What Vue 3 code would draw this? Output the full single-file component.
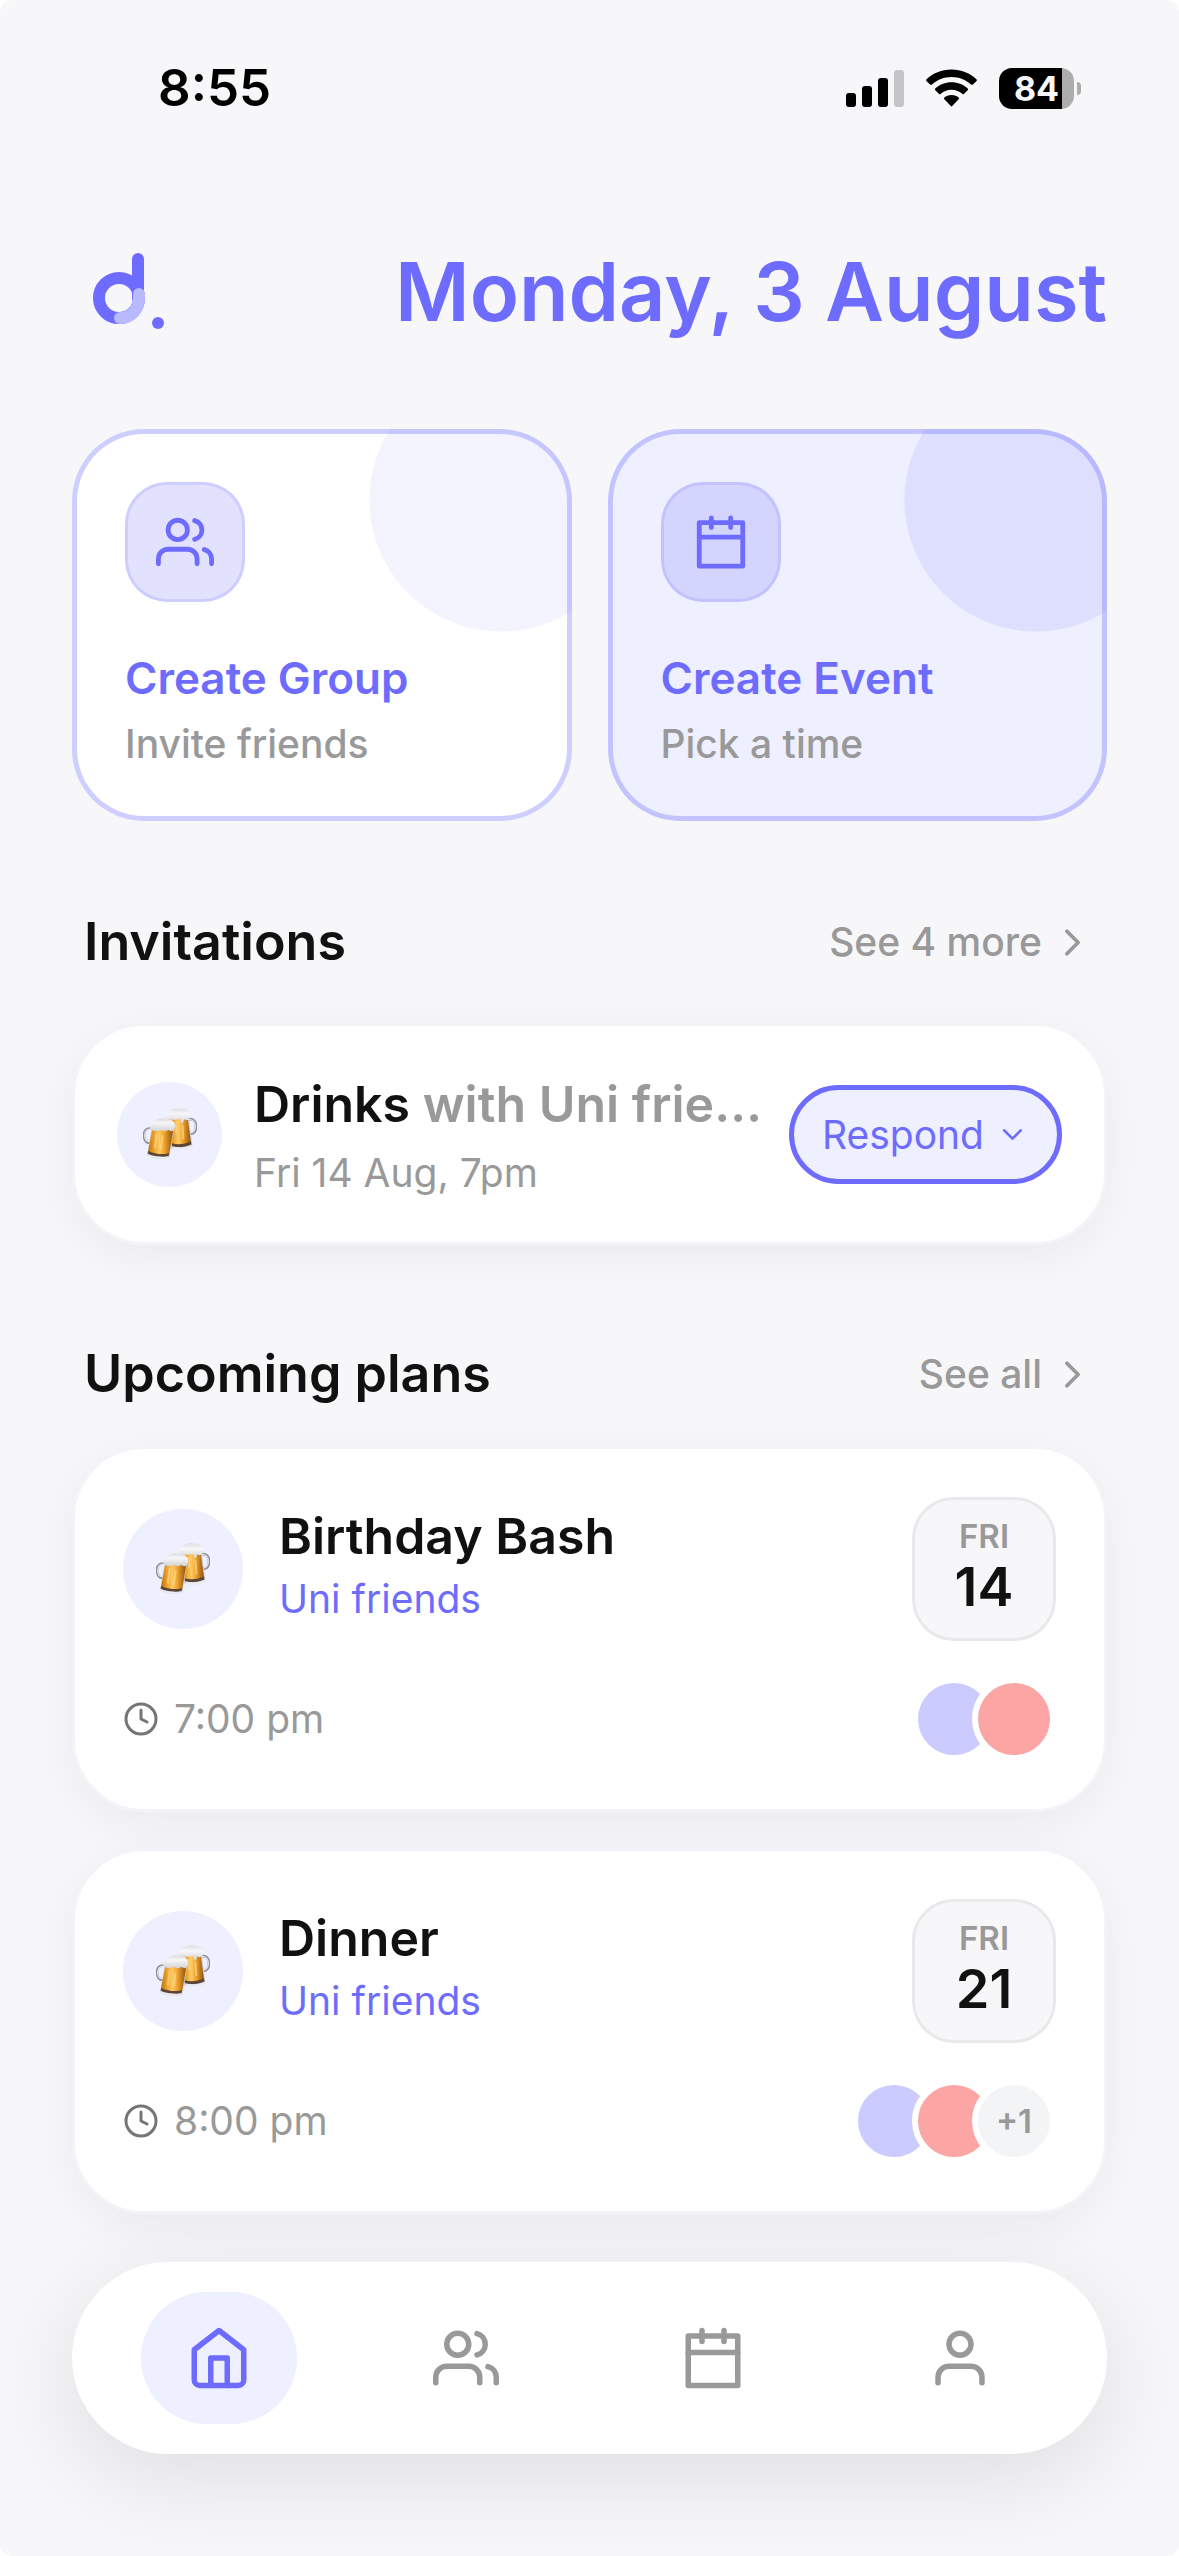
<template>
  <div class="page">

    <!-- ── STATUS BAR ── -->
    <div class="status-bar">
      <span class="status-time">8:55</span>
      <div class="status-icons">
        <svg class="icon-signal" viewBox="0 0 58 38">
          <rect x="0" y="24" width="10" height="14" rx="3" />
          <rect x="16" y="17" width="10" height="21" rx="3" />
          <rect x="32" y="9" width="10" height="29" rx="3" />
          <rect x="48" y="1" width="10" height="37" rx="3" class="bar-off" />
        </svg>
        <svg class="icon-wifi" viewBox="0 0 152 112">
          <path d="M76 1C47 1 20 12 1 31Q0 33 1 35L13 46Q15 47 17 46C33 31 54 23 76 23s43 8 59 23q2 1 4 0l12-11q1-2 0-4C132 12 105 1 76 1z" />
          <path d="M76 39c-19 0-36 7-49 19q-1 2 0 4l12 12q2 1 4 0c9-8 20-13 33-13s24 5 33 13q2 1 4 0l12-12q1-2 0-4C112 46 95 39 76 39z" />
          <path d="M76 77c-9 0-16 3-22 8q-1 2 0 4l20 21q2 2 4 0l20-21q1-2 0-4c-6-5-13-8-22-8z" />
        </svg>
        <div class="battery">
          <div class="battery-body">84</div>
          <div class="battery-nub"></div>
        </div>
      </div>
    </div>

    <!-- ── HEADER ── -->
    <header class="header">
      <svg class="logo" viewBox="0 0 76 84" fill="none" stroke-width="12" stroke-linecap="round">
        <circle cx="29" cy="48" r="20" stroke="#6e6cff" />
        <path d="M48 9v39" stroke="#6e6cff" />
        <path d="M49 44v4c0 11-8 20-19 20" stroke="#b9b9ff" />
        <circle cx="68" cy="73" r="6" fill="#6e6cff" />
      </svg>
      <h1 class="date-title">Monday, 3 August</h1>
    </header>

    <main class="content">

      <!-- ── QUICK ACTIONS ── -->
      <div class="actions">
        <button v-for="a in actions" :key="a.title" class="action-card" :class="a.variant">
          <span class="action-icon">
            <svg class="icon" viewBox="0 0 24 24">
              <path v-for="d in icons[a.icon]" :key="d" :d="d" />
            </svg>
          </span>
          <span class="action-title">{{ a.title }}</span>
          <span class="action-sub">{{ a.sub }}</span>
        </button>
      </div>

      <!-- ── INVITATIONS ── -->
      <section class="section-invites">
        <div class="section-head">
          <h2>Invitations</h2>
          <a href="#invitations" class="see-link">
            See 4 more
            <svg class="icon" viewBox="0 0 24 24"><path d="M9 18l6-6-6-6" /></svg>
          </a>
        </div>
        <article class="card invite">
          <div class="avatar avatar-sm">
            <svg class="beers"><use href="#beers" /></svg>
          </div>
          <div class="invite-text">
            <h3 class="card-title">{{ invite.title }} <span class="muted">with {{ shorten(invite.group) }}</span></h3>
            <p class="card-sub muted">{{ invite.when }}</p>
          </div>
          <button class="btn-respond">
            Respond
            <svg class="icon" viewBox="0 0 24 24"><path d="M6 9l6 6 6-6" /></svg>
          </button>
        </article>
      </section>

      <!-- ── UPCOMING PLANS ── -->
      <section class="section-plans">
        <div class="section-head">
          <h2>Upcoming plans</h2>
          <a href="#plans" class="see-link">
            See all
            <svg class="icon" viewBox="0 0 24 24"><path d="M9 18l6-6-6-6" /></svg>
          </a>
        </div>
        <div class="plan-list">
          <article v-for="p in plans" :key="p.title" class="card plan">
            <div class="plan-top">
              <div class="avatar">
                <svg class="beers"><use href="#beers" /></svg>
              </div>
              <div class="plan-text">
                <h3 class="card-title">{{ p.title }}</h3>
                <p class="card-sub accent">{{ p.group }}</p>
              </div>
              <div class="date-box">
                <span class="date-day">{{ p.day }}</span>
                <span class="date-num">{{ p.date }}</span>
              </div>
            </div>
            <div class="plan-bottom">
              <span class="plan-time">
                <svg class="icon" viewBox="0 0 24 24">
                  <circle cx="12" cy="12" r="10" />
                  <path d="M12 6v6l4 2" />
                </svg>
                {{ p.time }}
              </span>
              <div class="people">
                <span class="person lilac"></span>
                <span class="person coral"></span>
                <span v-if="p.extra" class="person more">+{{ p.extra }}</span>
              </div>
            </div>
          </article>
        </div>
      </section>
    </main>

    <!-- ── BOTTOM NAV ── -->
    <nav class="tab-bar">
      <button
        v-for="t in tabs"
        :key="t.id"
        class="tab"
        :class="{ active: activeTab === t.id }"
        :aria-label="t.label"
        @click="activeTab = t.id"
      >
        <svg class="icon" viewBox="0 0 24 24">
          <path v-for="d in icons[t.id]" :key="d" :d="d" />
        </svg>
      </button>
    </nav>

    <!-- Shared symbol for the beer mugs -->
    <svg class="defs" aria-hidden="true">
      <defs>
        <linearGradient id="beer" x1="0" y1="0" x2="1" y2="0">
          <stop offset="0" stop-color="#b8700f" />
          <stop offset="0.2" stop-color="#e89a22" />
          <stop offset="0.45" stop-color="#ffcb66" />
          <stop offset="0.65" stop-color="#efa32c" />
          <stop offset="1" stop-color="#8f520c" />
        </linearGradient>
        <linearGradient id="foam" x1="0" y1="0" x2="0" y2="1">
          <stop offset="0" stop-color="#dcdce0" />
          <stop offset="0.35" stop-color="#f7f7f9" />
          <stop offset="1" stop-color="#d2d2d6" />
        </linearGradient>
      </defs>
      <symbol id="beers" viewBox="125 137 163 156">
        <path d="M263 171c12-4 22 6 22 20s-6 23-17 23" fill="none" stroke="#8d8d93" stroke-width="8" />
        <path d="M264 172c11-2 19 7 19 19s-5 20-15 21" fill="none" stroke="#e2e2e6" stroke-width="4" />
        <path d="M197 164l66 2 11 86c-12 9-46 12-64 6z" fill="#c9c9ce" />
        <path d="M200 166l60 2 10 74c-12 8-42 11-59 5z" fill="url(#beer)" />
        <path d="M211 243c18 5 42 3 59-5l1 9c-16 8-42 10-58 5z" fill="#5b4637" />
        <path d="M213 253c16 4 42 3 59-5l1 6c-14 8-42 10-58 5z" fill="#ececef" />
        <path d="M196 168c-8-8-1-19 9-21 8-9 25-12 36-8 15-2 26 6 26 18 2 7-1 14-6 15-6 2-8 2-11-2-2 2-3 14-7 14-5 0-3-14-8-15-9 4-28 5-39-1z" fill="url(#foam)" />
        <path d="M225 180v30M244 190l3 38" stroke="#ffdc91" stroke-width="6" stroke-linecap="round" opacity="0.6" />
        <path d="M150 199c-14-3-23 7-22 21s7 23 18 22" fill="none" stroke="#8d8d93" stroke-width="8" />
        <path d="M150 201c-12-2-20 6-20 18s6 20 16 20" fill="none" stroke="#e2e2e6" stroke-width="4" />
        <path d="M152 194l66 8-14 84c-16 7-53 4-67-7z" fill="#c9c9ce" />
        <path d="M154 196l62 8-12 72c-16 5-50 2-64-6z" fill="url(#beer)" />
        <path d="M141 266c15 9 47 12 63 7l-2 9c-15 3-49 1-63-8z" fill="#5b4637" />
        <path d="M139 275c14 8 47 12 64 7l-1 5c-15 6-51 3-64-6z" fill="#ececef" />
        <path d="M150 203c-6-7-3-18 6-22 7-10 22-16 35-12 15-2 30 6 31 19 1 10-3 17-9 19-5-1-8-3-12-4-8 6-17 3-22-1-9 6-20 4-29 1z" fill="url(#foam)" />
        <path d="M166 216l-5 40M184 222l-5 38" stroke="#ffdc91" stroke-width="6" stroke-linecap="round" opacity="0.6" />
      </symbol>
    </svg>
  </div>
</template>

<script setup>
import { ref } from 'vue'

const activeTab = ref('home')

// Stroke paths on a 24x24 grid
const icons = {
  home: [
    'M3 9l9-7 9 7v11a2 2 0 0 1-2 2H5a2 2 0 0 1-2-2z',
    'M9 22V12h6v10'
  ],
  groups: [
    'M17 21v-2a4 4 0 0 0-4-4H5a4 4 0 0 0-4 4v2',
    'M5 7a4 4 0 1 0 8 0a4 4 0 1 0-8 0',
    'M23 21v-2a4 4 0 0 0-3-3.87',
    'M16 3.13a4 4 0 0 1 0 7.75'
  ],
  calendar: [
    'M3 4h18v18H3z',
    'M16 2v4',
    'M8 2v4',
    'M3 10h18'
  ],
  profile: [
    'M20 21v-2a4 4 0 0 0-4-4H8a4 4 0 0 0-4 4v2',
    'M8 7a4 4 0 1 0 8 0a4 4 0 1 0-8 0'
  ]
}

const actions = [
  { title: 'Create Group', sub: 'Invite friends', icon: 'groups', variant: 'plain' },
  { title: 'Create Event', sub: 'Pick a time', icon: 'calendar', variant: 'tinted' }
]

const invite = { title: 'Drinks', group: 'Uni friends', when: 'Fri 14 Aug, 7pm' }

const plans = [
  { title: 'Birthday Bash', group: 'Uni friends', day: 'FRI', date: 14, time: '7:00 pm', extra: 0 },
  { title: 'Dinner', group: 'Uni friends', day: 'FRI', date: 21, time: '8:00 pm', extra: 1 }
]

const tabs = [
  { id: 'home', label: 'Home' },
  { id: 'groups', label: 'Groups' },
  { id: 'calendar', label: 'Calendar' },
  { id: 'profile', label: 'Profile' }
]

// Group names are cut short next to the respond button
const shorten = (name) => (name.length > 8 ? name.slice(0, 8) + '…' : name)
</script>

<style>
body { background: white; }
</style>

<style scoped>
.page {
  min-height: 100vh;
  box-sizing: border-box;
  display: flex;
  flex-direction: column;
  padding-bottom: 102px;
  background: #f7f7f9;
  border-radius: 12px;
  font-family: Inter, "Liberation Sans", sans-serif;
  color: #111;
}
.page * { box-sizing: border-box; }

h1, h2, h3, p { margin: 0; }

button {
  font-family: inherit;
  cursor: pointer;
}

.icon {
  fill: none;
  stroke: currentColor;
  stroke-width: 2;
  stroke-linecap: round;
  stroke-linejoin: round;
  flex-shrink: 0;
  overflow: visible;
}
.defs { position: absolute; width: 0; height: 0; }

.muted  { color: #999; }
.accent { color: #6e6cff; }

/* ── Status bar ── */
.status-bar {
  display: flex;
  align-items: center;
  justify-content: space-between;
  height: 176px;
  padding: 0 98px 0 158px;
  color: black;
}
.status-time {
  font-size: 51px;
  font-weight: 600;
  line-height: 62px;
}
.status-icons {
  display: flex;
  align-items: center;
  gap: 22px;
}
.icon-signal { width: 58px; height: 38px; }
.icon-wifi   { width: 51px; height: 38px; }
.bar-off     { fill: #c5c5c7; }
.battery {
  display: flex;
  align-items: center;
  gap: 3px;
}
.battery-body {
  width: 75px;
  height: 41px;
  border-radius: 13px;
  background: linear-gradient(to right, black 84%, #adadad 84%);
  color: #f7f7f9;
  font-size: 34px;
  font-weight: 700;
  line-height: 41px;
  text-align: center;
}
.battery-nub {
  width: 4px;
  height: 13px;
  border-radius: 0 4px 4px 0;
  background: #adadad;
}

/* ── Header ── */
.header {
  display: flex;
  align-items: center;
  justify-content: space-between;
  padding: 65px 72px 0 90px;
}
.logo { width: 76px; height: 84px; }
.date-title {
  font-size: 81px;
  font-weight: 600;
  line-height: 102px;
  color: #6e6cff;
}

.content {
  display: flex;
  flex-direction: column;
  padding: 86px 72px 48px;
}

/* ── Quick actions ── */
.actions {
  display: grid;
  grid-template-columns: 1fr 1fr;
  gap: 36px;
}
.action-card {
  display: flex;
  flex-direction: column;
  align-items: flex-start;
  padding: 48px;
  border: 5px solid rgba(110, 108, 255, 0.33);
  border-radius: 72px;
  background-origin: border-box;
  text-align: left;
}
.action-card.plain {
  background-color: white;
  background-image: radial-gradient(circle at calc(100% - 71px) 71px, rgba(110, 108, 255, 0.08) 131px, transparent 132px);
}
.action-card.tinted {
  background-color: #eeefff;
  background-image: radial-gradient(circle at calc(100% - 71px) 71px, rgba(110, 108, 255, 0.12) 131px, transparent 132px);
}
.action-icon {
  display: flex;
  align-items: center;
  justify-content: center;
  width: 120px;
  height: 120px;
  margin-bottom: 48px;
  border: 3px solid rgba(110, 108, 255, 0.18);
  border-radius: 42px;
  background: rgba(110, 108, 255, 0.2);
  color: #6e6cff;
}
.action-icon .icon { width: 58px; height: 58px; }
.action-title {
  margin-bottom: 14px;
  font-size: 44px;
  font-weight: 600;
  line-height: 56px;
  color: #6e6cff;
}
.action-sub {
  font-size: 39px;
  font-weight: 500;
  line-height: 48px;
  color: #999;
}

/* ── Section headings ── */
.section-invites { margin-top: 88px; }
.section-plans   { margin-top: 96px; }
.section-head {
  display: flex;
  align-items: center;
  justify-content: space-between;
  padding: 0 12px;
}
.section-invites .section-head { margin-bottom: 48px; }
.section-plans .section-head   { margin-bottom: 39px; }
.section-head h2 {
  font-size: 52px;
  font-weight: 600;
  line-height: 66px;
}
.see-link {
  display: flex;
  align-items: center;
  gap: 8px;
  font-size: 39px;
  font-weight: 500;
  line-height: 48px;
  color: #999;
  text-decoration: none;
}
.see-link .icon { width: 45px; height: 45px; }

/* ── Cards ── */
.card {
  border: 3px solid #f3f4f7;
  border-radius: 72px;
  background: white;
  box-shadow: 0 12px 48px rgba(0, 0, 0, 0.05);
}
.card-title {
  font-size: 50px;
  font-weight: 600;
  line-height: 62px;
  white-space: nowrap;
}
.card-sub {
  font-size: 39px;
  line-height: 48px;
}
.avatar {
  display: flex;
  align-items: center;
  justify-content: center;
  width: 120px;
  height: 120px;
  flex-shrink: 0;
  border-radius: 50%;
  background: #eeefff;
}
.avatar-sm { width: 105px; height: 105px; }
.beers { width: 54px; height: 52px; }

/* ── Invitation ── */
.invite {
  display: flex;
  align-items: center;
  gap: 32px;
  padding: 45px 42px;
}
.invite-text {
  flex: 1;
  min-width: 0;
  display: flex;
  flex-direction: column;
  gap: 14px;
  padding-top: 2px;
}
.btn-respond {
  display: flex;
  align-items: center;
  gap: 12px;
  height: 99px;
  padding: 0 28px;
  border: 5px solid #6e6cff;
  border-radius: 50px;
  background: #eeefff;
  color: #6e6cff;
  font-size: 39px;
  flex-shrink: 0;
}
.btn-respond .icon { width: 33px; height: 33px; }

/* ── Plans ── */
.plan-list {
  display: flex;
  flex-direction: column;
  gap: 36px;
}
.plan {
  display: flex;
  flex-direction: column;
  gap: 36px;
  padding: 48px;
}
.plan-top {
  display: flex;
  align-items: center;
  gap: 36px;
}
.plan-text {
  flex: 1;
  min-width: 0;
  display: flex;
  flex-direction: column;
  gap: 8px;
  padding-bottom: 10px;
}
.date-box {
  display: flex;
  flex-direction: column;
  align-items: center;
  justify-content: center;
  width: 144px;
  height: 144px;
  border: 3px solid #e9e9eb;
  border-radius: 42px;
  background: #f7f7f9;
}
.date-day {
  font-size: 33px;
  font-weight: 600;
  line-height: 36px;
  color: #999;
}
.date-num {
  font-size: 54px;
  font-weight: 600;
  line-height: 66px;
}
.plan-bottom {
  display: flex;
  align-items: center;
  justify-content: space-between;
}
.plan-time {
  display: flex;
  align-items: center;
  gap: 15px;
  font-size: 39px;
  line-height: 48px;
  color: #999;
}
.plan-time .icon { width: 36px; height: 36px; color: #757575; }
.people { display: flex; }
.person {
  width: 84px;
  height: 84px;
  border: 6px solid white;
  border-radius: 50%;
  font-size: 33px;
  font-weight: 600;
  line-height: 72px;
  text-align: center;
}
.person + .person { margin-left: -24px; }
.lilac { background: #cbcbff; }
.coral { background: #fca5a5; }
.more  { background: #f3f4f6; color: #999; }

/* ── Bottom nav ── */
.tab-bar {
  position: sticky;
  bottom: 102px;
  display: flex;
  margin: auto 72px 0;
  padding: 30px 24px;
  border-radius: 96px;
  background: white;
  box-shadow: 0 24px 96px rgba(0, 0, 0, 0.1);
}
.tab {
  flex: 1;
  display: flex;
  justify-content: center;
  padding: 0;
  border: none;
  background: none;
  color: #999;
}
.tab .icon {
  width: 156px;
  height: 132px;
  padding: 33px 45px;
  border-radius: 66px;
}
.tab.active .icon {
  background: #eeefff;
  color: #6e6cff;
}
</style>
